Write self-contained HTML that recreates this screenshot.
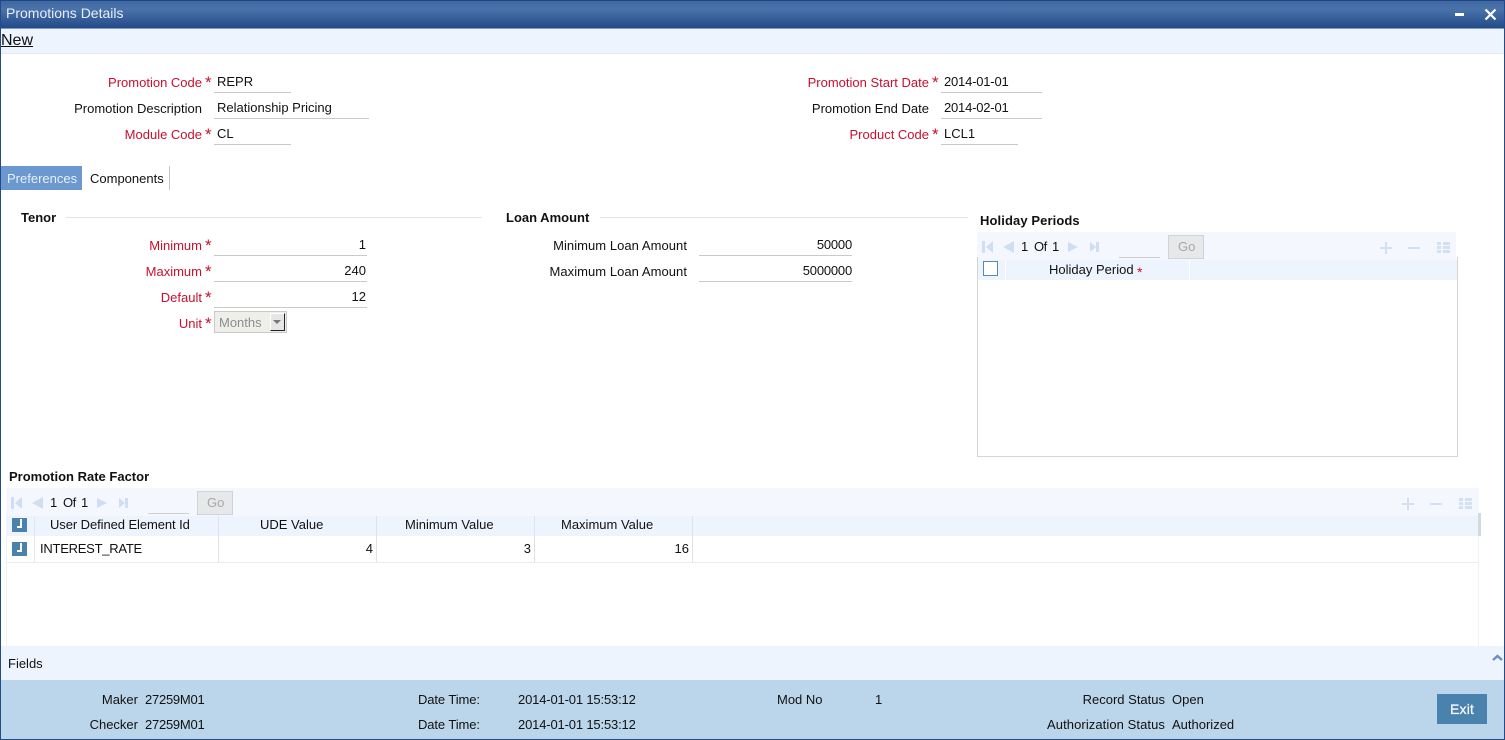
<!DOCTYPE html>
<html><head><meta charset="utf-8"><style>
html,body{margin:0;padding:0;background:#fff}
#p{position:relative;width:1505px;height:740px;overflow:hidden;background:#fff;font:13px/16px "Liberation Sans",Arial,sans-serif;color:#111}
#p div,#p span.a{position:absolute}
.t{position:absolute;white-space:nowrap}
.n{letter-spacing:-.2px}
.r{position:absolute;white-space:nowrap;text-align:right}
.red{color:#c8102e}
.st{color:#c8102e;position:absolute;font-size:17px}
.ln{position:absolute;height:1px;background:#c9c9c9}
.h{position:absolute;white-space:nowrap;font-weight:bold}
.chk{position:absolute;width:15px;height:14px;background:#4a82ae}
.chk:before{content:"";position:absolute;left:8px;top:1px;width:2px;height:9px;background:#fff}
.chk:after{content:"";position:absolute;left:5px;top:8px;width:4px;height:2px;background:#fff}
</style></head><body><div id="p">
<div style="left:0;top:0;width:1505px;height:28px;background:linear-gradient(#3f68a3,#4a72aa 30%,#234b89);border-top:1px solid #1f4583;box-sizing:border-box"></div>
<div style="left:0;top:28px;width:1505px;height:1px;background:#7f9ab8"></div>
<div class="t" style="left:6px;top:5px;color:#e8eef6;font-size:14px">Promotions Details</div>
<div style="left:1455px;top:13px;width:9px;height:3px;background:#fff"></div>
<svg style="position:absolute;left:1484px;top:8px" width="13" height="13"><path d="M1.5 1.5L11.5 11.5M11.5 1.5L1.5 11.5" stroke="#fff" stroke-width="2.2"/></svg>
<div style="left:0;top:29px;width:1505px;height:24px;background:#edf4fe;border-bottom:1px solid #e6e8ec"></div>
<div class="t" style="left:1px;top:33px;font-size:16px;text-decoration:underline;color:#111">New</div>

<div class="r red" style="right:1303px;top:75px">Promotion Code</div><div class="st" style="left:205px;top:75px">*</div>
<div class="t" style="left:217px;top:74px">REPR</div><div class="ln" style="left:214px;top:92px;width:77px"></div>
<div class="r" style="right:1303px;top:101px">Promotion Description</div>
<div class="t" style="left:217px;top:100px">Relationship Pricing</div><div class="ln" style="left:214px;top:118px;width:155px"></div>
<div class="r red" style="right:1303px;top:127px">Module Code</div><div class="st" style="left:205px;top:127px">*</div>
<div class="t" style="left:217px;top:126px">CL</div><div class="ln" style="left:214px;top:144px;width:77px"></div>

<div class="r red" style="right:576px;top:75px">Promotion Start Date</div><div class="st" style="left:932px;top:75px">*</div>
<div class="t n" style="left:944px;top:74px">2014-01-01</div><div class="ln" style="left:941px;top:92px;width:101px"></div>
<div class="r" style="right:576px;top:101px">Promotion End Date</div>
<div class="t n" style="left:944px;top:100px">2014-02-01</div><div class="ln" style="left:941px;top:118px;width:101px"></div>
<div class="r red" style="right:576px;top:127px">Product Code</div><div class="st" style="left:932px;top:127px">*</div>
<div class="t" style="left:944px;top:126px">LCL1</div><div class="ln" style="left:941px;top:144px;width:77px"></div>

<div style="left:1px;top:166px;width:81px;height:24px;background:#6b98cf"></div>
<div class="t" style="left:7px;top:171px;color:#e8f0fa">Preferences</div>
<div class="t" style="left:90px;top:171px">Components</div>
<div style="left:169px;top:166px;width:1px;height:24px;background:#c4c4c4"></div>

<div class="h" style="left:21px;top:210px">Tenor</div><div class="ln" style="left:66px;top:217px;width:416px;background:#e4e4e4"></div>
<div class="r red" style="right:1303px;top:238px">Minimum</div><div class="st" style="left:205px;top:238px">*</div>
<div class="r" style="right:1139px;top:237px">1</div><div class="ln" style="left:214px;top:255px;width:153px"></div>
<div class="r red" style="right:1303px;top:264px">Maximum</div><div class="st" style="left:205px;top:264px">*</div>
<div class="r" style="right:1139px;top:263px">240</div><div class="ln" style="left:214px;top:281px;width:153px"></div>
<div class="r red" style="right:1303px;top:290px">Default</div><div class="st" style="left:205px;top:290px">*</div>
<div class="r" style="right:1139px;top:289px">12</div><div class="ln" style="left:214px;top:307px;width:153px"></div>
<div class="r red" style="right:1303px;top:316px">Unit</div><div class="st" style="left:205px;top:316px">*</div>
<div style="left:214px;top:311px;width:73px;height:22px;box-sizing:border-box;background:#efefe9;border:1px solid #c9c9c9"></div>
<div class="t" style="left:219px;top:315px;color:#8a8f8f">Months</div>
<div style="left:270px;top:313px;width:15px;height:18px;box-sizing:border-box;background:#e6e6e6;border-right:1px solid #222;border-bottom:1px solid #222;border-top:1px solid #fff;border-left:1px solid #fff"></div>
<svg style="position:absolute;left:273px;top:320px" width="9" height="6"><path d="M0 0H8L4 4z" fill="#777"/></svg>

<div class="h" style="left:506px;top:210px">Loan Amount</div><div class="ln" style="left:600px;top:217px;width:368px;background:#e4e4e4"></div>
<div class="r" style="right:818px;top:238px;letter-spacing:.05px">Minimum Loan Amount</div>
<div class="r n" style="right:653px;top:237px">50000</div><div class="ln" style="left:699px;top:255px;width:153px"></div>
<div class="r" style="right:818px;top:264px;letter-spacing:.05px">Maximum Loan Amount</div>
<div class="r n" style="right:653px;top:263px">5000000</div><div class="ln" style="left:699px;top:281px;width:153px"></div>

<div class="h" style="left:980px;top:213px;letter-spacing:.1px">Holiday Periods</div>
<div style="left:977px;top:232px;width:479px;height:28px;background:#f4f8fe"></div>
<div style="left:977px;top:257px;width:481px;height:200px;box-sizing:border-box;border:1px solid #d4d4d4;border-top:0"></div>
<div style="left:978px;top:260px;width:479px;height:20px;background:#edf4fe"></div>
<div style="left:1005px;top:260px;width:1px;height:20px;background:#fff"></div>
<div style="left:1189px;top:260px;width:1px;height:20px;background:#fff"></div>
<div style="left:983px;top:261px;width:15px;height:15px;box-sizing:border-box;background:#fff;border:1px solid #5c89ab"></div>
<div class="t" style="left:1049px;top:262px">Holiday Period</div><div class="st" style="left:1137px;top:264px;font-size:14px">*</div>
<svg style="position:absolute;left:982px;top:241px" width="120" height="12" fill="#cfdef3"><path d="M0 0h3v12H0zM11 0v12L4 6zM32 0v12L21 6zM86 1v10l10-5zM108 1v10l6-5zM114 1h3v10h-3z"/></svg>
<div class="t" style="left:1021px;top:239px">1</div><div class="t" style="left:1034px;top:239px;letter-spacing:-.5px">Of</div><div class="t" style="left:1052px;top:239px">1</div>
<div class="ln" style="left:1119px;top:257px;width:41px;background:#cfcfcf"></div>
<div style="left:1168px;top:235px;width:36px;height:24px;box-sizing:border-box;background:#e6e8ea;border:1px solid #d0d2d4"></div>
<div class="t" style="left:1178px;top:239px;color:#a8a8a8">Go</div>
<svg style="position:absolute;left:1380px;top:242px" width="70" height="12" fill="#d3e0f2"><path d="M0 5h12v2H0zM5 0h2v12H5zM28 5h12v2H28zM57 0h4v3h-4zM63 0h7v3h-7zM57 4h4v3h-4zM63 4h7v3h-7zM57 8h4v3h-4zM63 8h7v3h-7z"/></svg>

<div class="h" style="left:9px;top:469px">Promotion Rate Factor</div>
<div style="left:6px;top:488px;width:1473px;height:28px;background:#f4f8fe"></div>
<div style="left:6px;top:516px;width:1472px;height:20px;background:#edf4fe"></div>
<div style="left:6px;top:536px;width:1472px;height:26px;border-bottom:1px solid #f3ece6"></div>
<div style="left:6px;top:536px;width:1px;height:110px;background:#f0f0f0"></div>
<div style="left:1478px;top:536px;width:1px;height:110px;background:#f0f0f0"></div>
<div style="left:1478px;top:513px;width:3px;height:23px;background:#cfdcdc"></div>
<div style="left:34px;top:516px;width:1px;height:46px;background:#e4e8ec"></div>
<div style="left:218px;top:516px;width:1px;height:46px;background:#dfe3e8"></div>
<div style="left:376px;top:516px;width:1px;height:46px;background:#dfe3e8"></div>
<div style="left:534px;top:516px;width:1px;height:46px;background:#dfe3e8"></div>
<div style="left:692px;top:516px;width:1px;height:46px;background:#dfe3e8"></div>
<svg style="position:absolute;left:11px;top:497px" width="120" height="12" fill="#cfdef3"><path d="M0 0h3v12H0zM11 0v12L4 6zM32 0v12L21 6zM86 1v10l10-5zM108 1v10l6-5zM114 1h3v10h-3z"/></svg>
<div class="t" style="left:50px;top:495px">1</div><div class="t" style="left:63px;top:495px;letter-spacing:-.5px">Of</div><div class="t" style="left:81px;top:495px">1</div>
<div class="ln" style="left:148px;top:513px;width:41px;background:#cfcfcf"></div>
<div style="left:197px;top:491px;width:36px;height:24px;box-sizing:border-box;background:#e6e8ea;border:1px solid #d0d2d4"></div>
<div class="t" style="left:207px;top:495px;color:#a8a8a8">Go</div>
<svg style="position:absolute;left:1402px;top:498px" width="70" height="12" fill="#d3e0f2"><path d="M0 5h12v2H0zM5 0h2v12H5zM28 5h12v2H28zM57 0h4v3h-4zM63 0h7v3h-7zM57 4h4v3h-4zM63 4h7v3h-7zM57 8h4v3h-4zM63 8h7v3h-7z"/></svg>
<div class="chk" style="left:12px;top:518px"></div>
<div class="chk" style="left:12px;top:542px"></div>
<div class="t" style="left:50px;top:517px;letter-spacing:-.08px">User Defined Element Id</div>
<div class="t" style="left:260px;top:517px">UDE Value</div>
<div class="t" style="left:405px;top:517px">Minimum Value</div>
<div class="t" style="left:561px;top:517px">Maximum Value</div>
<div class="t" style="left:40px;top:541px;letter-spacing:-.25px">INTEREST_RATE</div>
<div class="r" style="right:1132px;top:541px">4</div>
<div class="r" style="right:974px;top:541px">3</div>
<div class="r" style="right:816px;top:541px">16</div>

<div style="left:0;top:646px;width:1505px;height:34px;background:#edf4fe"></div>
<div class="t" style="left:8px;top:656px">Fields</div>
<svg style="position:absolute;left:1492px;top:654px" width="11" height="8"><path d="M1 6L5.5 2L10 6" fill="none" stroke="#6b8fc4" stroke-width="2.4"/></svg>
<div style="left:0;top:680px;width:1505px;height:60px;background:#bbd6eb"></div>
<div class="r" style="right:1367px;top:692px">Maker</div><div class="t n" style="left:145px;top:692px;letter-spacing:-.25px">27259M01</div>
<div class="r" style="right:1367px;top:717px">Checker</div><div class="t n" style="left:145px;top:717px;letter-spacing:-.25px">27259M01</div>
<div class="t" style="left:418px;top:692px;letter-spacing:-.1px">Date Time:</div><div class="t" style="left:518px;top:692px;letter-spacing:-.16px">2014-01-01 15:53:12</div>
<div class="t" style="left:418px;top:717px;letter-spacing:-.1px">Date Time:</div><div class="t" style="left:518px;top:717px;letter-spacing:-.16px">2014-01-01 15:53:12</div>
<div class="t" style="left:777px;top:692px">Mod No</div><div class="t" style="left:875px;top:692px">1</div>
<div class="r" style="right:340px;top:692px">Record Status</div><div class="t" style="left:1172px;top:692px">Open</div>
<div class="r" style="right:340px;top:717px;letter-spacing:.08px">Authorization Status</div><div class="t" style="left:1172px;top:717px">Authorized</div>
<div style="left:1437px;top:694px;width:50px;height:30px;background:#4a82ae"></div>
<div class="t" style="left:1450px;top:701px;color:#f5f8fb;font-size:14px;letter-spacing:.2px;-webkit-text-stroke:.3px #f5f8fb">Exit</div>

<div style="left:0;top:0;width:1px;height:740px;background:#234b89"></div>
<div style="left:1504px;top:0;width:1px;height:740px;background:#234b89"></div>
<div style="left:0;top:739px;width:1505px;height:1px;background:#234b89"></div>
</div></body></html>
